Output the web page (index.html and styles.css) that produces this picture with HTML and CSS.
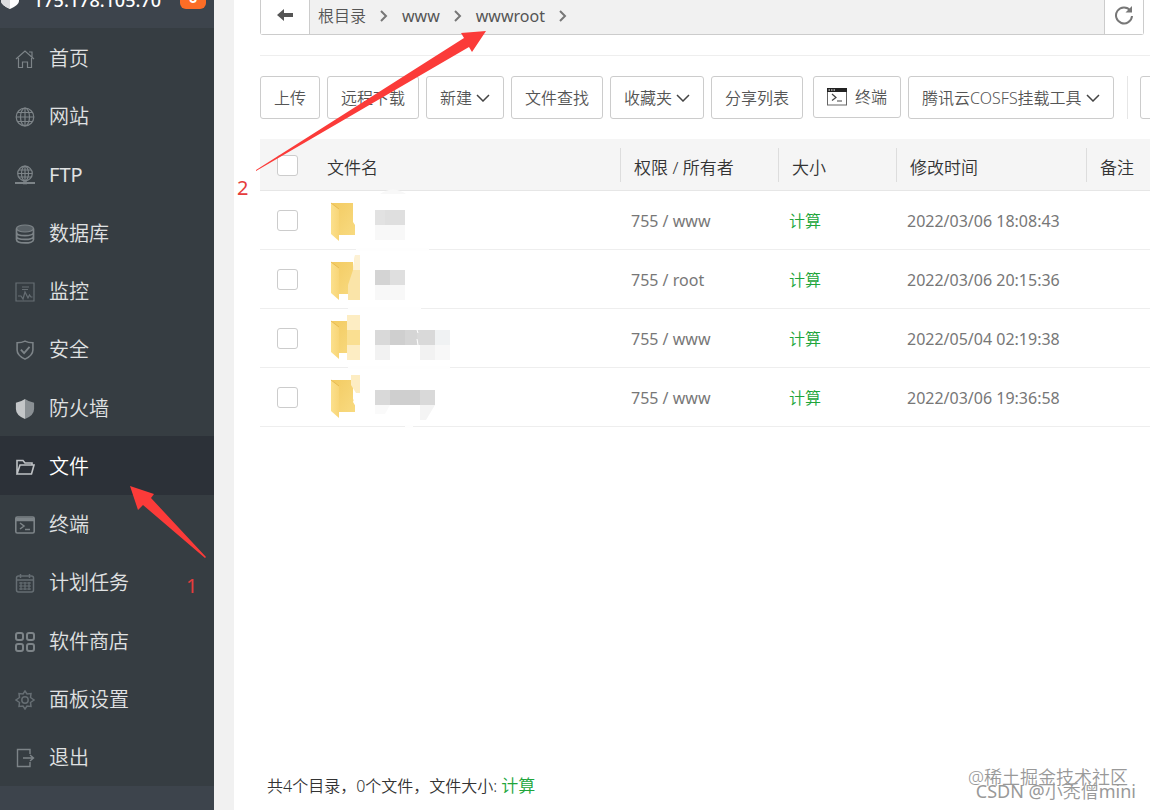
FILE: index.html
```html
<!DOCTYPE html>
<html lang="zh-CN">
<head>
<meta charset="utf-8">
<title>文件</title>
<link rel="stylesheet" href="styles.css">
</head>
<body>
<div class="app">
  <aside class="sidebar">
    <header class="server">
      <svg class="server-logo" viewBox="0 0 18 22"><path d="M9 0 18 4v10q0 4-9 8-9-4-9-8V4z" fill="#fff"/><path d="M9 0 0 4v10q0 4 9 8z" fill="#dcdcdf"/></svg>
      <span class="server-ip">175.178.105.70</span>
      <span class="badge">0</span>
    </header>
    <nav class="menu">
      <a href="#"><svg viewBox="0 0 20 20"><path d="M1 10 10 2l9 8M14 3h3v5M3.500 9v9.500h4V13h5v5.500h4V9"/></svg>首页</a>
      <a href="#"><svg viewBox="0 0 20 20"><circle cx="10" cy="10" r="8.800"/><ellipse cx="10" cy="10" rx="4.500" ry="8.800"/><path d="M10 1v18M1 10h18M2.500 5.500h15M2.500 14.500h15"/></svg>网站</a>
      <a href="#" class="latin"><svg viewBox="0 0 20 20"><circle cx="10" cy="8.500" r="7.300"/><ellipse cx="10" cy="8.500" rx="3.500" ry="7.300"/><path d="M10 1v15M3 8.500h14M4 5h12M4 12h12"/><path d="M0 18h20" stroke-width="2"/><path d="M8 17.800h4" stroke-width="3"/></svg>FTP</a>
      <a href="#"><svg viewBox="0 0 20 20"><ellipse cx="10" cy="4.500" rx="8.500" ry="3.500" fill="#596166"/><path d="M1.500 4.500v11c0 4.600 17 4.600 17 0v-11M1.500 8.200c0 4.600 17 4.600 17 0M1.500 12c0 4.600 17 4.600 17 0" stroke-width="1.700"/></svg>数据库</a>
      <a href="#"><svg class="dim" viewBox="0 0 20 20"><path d="M1 1h18v18H1zM7 5h7M7 7.500h6M3 14h3l2 3 2-7 3 6 1.500-3 1.500 2h1.500"/></svg>监控</a>
      <a href="#"><svg viewBox="0 0 20 22"><path d="M10 1.200Q13.500 3 18.700 3v8q0 6-8.700 10-8.700-4-8.700-10V3Q6.500 3 10 1.200z" stroke-width="1.700"/><path d="m5.500 10.500 3.500 4 6-7" stroke-width="2"/></svg>安全</a>
      <a href="#"><svg viewBox="0 0 20 22"><path d="M10 0v22Q0 18 0 11V4q6-1 10-4z" fill="#c3c6c8" stroke="none"/><path d="M10 0v22q10-4 10-11V4q-6-1-10-4z" fill="#8a9094" stroke="none"/></svg>防火墙</a>
      <a href="#" class="active" aria-current="page"><svg viewBox="0 0 20 20"><path d="M2 17V3.500h6l2 2.500h7v2M2 17 5 8h14l-2.500 9z" stroke-width="1.600"/></svg>文件</a>
      <a href="#"><svg viewBox="0 0 20 20"><rect x=".8" y="2" width="18.400" height="16" rx="1.500" stroke-width="1.600"/><path d="M1 4.500h18" stroke-width="3.500"/><path d="m5 8 4 3-4 3M10 14.500h5" stroke-width="1.500"/></svg>终端</a>
      <a href="#"><svg class="dim" viewBox="0 0 20 20"><rect x="1.500" y="3" width="17" height="16" rx="2" stroke-width="1.500"/><path d="M5.500 1v4M14.500 1v4M2 7h16" stroke-width="1.500"/><path d="M4 10h12M4 13h12M4 16h12M6 9v8M10 9v8M14 9v8"/></svg>计划任务</a>
      <a href="#"><svg viewBox="0 0 20 20"><g stroke-width="2"><rect x="1" y="1" width="7" height="7" rx="2"/><rect x="12" y="1" width="7" height="7" rx="2"/><rect x="1" y="12" width="7" height="7" rx="2"/><rect x="12" y="12" width="7" height="7" rx="2"/></g></svg>软件商店</a>
      <a href="#"><svg class="dim" viewBox="0 0 20 20"><circle cx="10" cy="10" r="3.200" stroke-width="1.500"/><path d="m10 1 2 3 4-.5-.5 4 3.500 2.500-3.500 2.500.5 4-4-.5-2 3-2-3-4 .5.5-4L1 10l3.500-2.500-.5-4 4 .5z" stroke-width="1.500"/></svg>面板设置</a>
      <a href="#"><svg viewBox="0 0 20 20"><path d="M15 6V1.500H2.500v17H15V14M8 10h10m-3-3 3.500 3-3.500 3" stroke-width="1.400"/></svg>退出</a>
    </nav>
  </aside>

  <main class="main">
    <div class="pathbar">
      <button class="back" aria-label="返回"><svg width="16" height="12" viewBox="0 0 16 12"><path d="M0 6l7-6v4h9v4H7v4z" fill="#555"/></svg></button>
      <nav class="crumbs">
        <a href="#">根目录</a><svg viewBox="0 0 8 12"><path d="m1 1 5 5-5 5"/></svg>
        <a href="#" class="latin">www</a><svg viewBox="0 0 8 12"><path d="m1 1 5 5-5 5"/></svg>
        <a href="#" class="latin">wwwroot</a><svg viewBox="0 0 8 12"><path d="m1 1 5 5-5 5"/></svg>
      </nav>
      <button class="refresh" aria-label="刷新"><svg width="20" height="20" viewBox="0 0 20 20"><path d="M16.300 5.500A8 8 0 1 0 18 11" fill="none" stroke="#777" stroke-width="2"/><path d="M18 1v6.500h-6.500z" fill="#777"/></svg></button>
    </div>

    <div class="toolbar">
      <button class="btn">上传</button>
      <button class="btn">远程下载</button>
      <button class="btn">新建<svg class="chev" viewBox="0 0 14 8"><path d="m1 1 6 6 6-6"/></svg></button>
      <button class="btn">文件查找</button>
      <button class="btn">收藏夹<svg class="chev" viewBox="0 0 14 8"><path d="m1 1 6 6 6-6"/></svg></button>
      <button class="btn">分享列表</button>
      <button class="btn terminal"><svg width="20" height="18" viewBox="0 0 20 18"><rect x=".5" y=".5" width="19" height="16.500" fill="none" stroke="#666"/><path d="M0 0h20v4H0z" fill="#222"/><path d="M1.500 2h1.500m1 0h1.500m1 0H8" stroke="#fff"/><path d="m5 6 4 3.500-4 3M10 13h5" fill="none" stroke="#444" stroke-width="1.200"/></svg>终端</button>
      <button class="btn">腾讯云COSFS挂载工具<svg class="chev" viewBox="0 0 14 8"><path d="m1 1 6 6 6-6"/></svg></button>
      <span class="divider"></span>
      <button class="btn" aria-label="更多"></button>
    </div>

    <svg class="defs" width="0" height="0" aria-hidden="true">
      <defs>
        <linearGradient id="flap" x1="0" x2="1"><stop offset="0" stop-color="#fbe08d"/><stop offset="1" stop-color="#f8d577"/></linearGradient>
        <linearGradient id="back" x1="0" x2="1" y1="0" y2="1"><stop offset="0" stop-color="#f3cb62"/><stop offset="1" stop-color="#f8da80"/></linearGradient>
        <g id="folder"><path d="M1 11h21v19l2 3v10H8z" fill="url(#back)"/><path d="M0 11l8 6v32l-8-7z" fill="url(#flap)"/><path d="M0 11l8 6" stroke="#e8bb52" fill="none"/></g>
      </defs>
    </svg>

    <table class="files">
      <colgroup><col class="c-check"><col><col class="c-perm"><col class="c-size"><col class="c-time"><col class="c-note"></colgroup>
      <thead>
        <tr><th><input type="checkbox" aria-label="全选"></th><th><div class="head first">文件名</div></th><th><div class="head">权限 / 所有者</div></th><th><div class="head">大小</div></th><th><div class="head">修改时间</div></th><th><div class="head">备注</div></th></tr>
      </thead>
      <tbody>
        <tr><td><input type="checkbox" aria-label="选择目录 1"></td>
          <td class="name"><svg viewBox="0 0 120 56"><path d="M25 56h73v3H25z" fill="#fefefe"/><use href="#folder"/><path d="M44 18h30v15H44z" fill="#dfdfdf"/><path d="M44 18h10v15H44z" fill="#e2e2e2"/><path d="M44 33h30v15H44z" fill="#f8f8f8"/><path d="M49 2q13-9 26 0z" fill="#f8f8f8"/></svg></td>
          <td>755 / www</td><td><a href="#">计算</a></td><td>2022/03/06 18:08:43</td><td></td></tr>
        <tr><td><input type="checkbox" aria-label="选择目录 2"></td>
          <td class="name"><svg viewBox="0 0 120 56"><path d="M17 56h73v3H17z" fill="#fefefe"/><use href="#folder"/><path d="M24 4h5v45H17V34l5-15z" fill="#fae4a8"/><path d="M24 4h5v15h-7z" fill="#fdf1d4"/><path d="M44 19h15v15H44z" fill="#d4d4d4"/><path d="M59 19h15v15H59z" fill="#dfdfdf"/><path d="M44 34h30v15H44z" fill="#f8f8f8"/></svg></td>
          <td>755 / root</td><td><a href="#">计算</a></td><td>2022/03/06 20:15:36</td><td></td></tr>
        <tr><td><input type="checkbox" aria-label="选择目录 3"></td>
          <td class="name"><svg viewBox="0 0 120 56"><path d="M17 56h102v3H17z" fill="#fefefe"/><use href="#folder"/><path d="M16 5h13v45H16z" fill="#fdedc3"/><path d="M16 20h13v15H16z" fill="#fadf91"/><path d="M44 20h60v15H44z" fill="#d9d9d9"/><path d="M59 20h27v15H59z" fill="#cfcfcf"/><path d="M74 20h12v15H74z" fill="#d5d5d5"/><path d="M86 20l1 3M86 29l1 6" stroke="#fff" fill="none"/><path d="M104 20h15v15h-15z" fill="#f0f2f3"/><path d="M44 35h15v15H44zM89 35h15v15H89z" fill="#f2f2f2"/><path d="M104 35h15v15h-15z" fill="#f8f8f8"/></svg></td>
          <td>755 / www</td><td><a href="#">计算</a></td><td>2022/05/04 02:19:38</td><td></td></tr>
        <tr><td><input type="checkbox" aria-label="选择目录 4"></td>
          <td class="name"><svg viewBox="0 0 120 56"><path d="M74 56h8v3h-8z" fill="#fefefe"/><use href="#folder"/><path d="M25 24l-3 9 3 5z" fill="#fff"/><path d="M20 6h9v18h-4l-5-8z" fill="#fdedc3"/><path d="M44 21h60v15H44z" fill="#d9d9d9"/><path d="M59 21h30v15H59z" fill="#cfcfcf"/><path d="M44 36h15l-5 9H44z" fill="#fafafa"/><path d="M89 36h15l-9 15h-6z" fill="#f4f4f4"/></svg></td>
          <td>755 / www</td><td><a href="#">计算</a></td><td>2022/03/06 19:36:58</td><td></td></tr>
      </tbody>
    </table>

    <footer class="summary">共4个目录，0个文件，文件大小: <a href="#">计算</a></footer>
  </main>
</div>

<svg class="annotations" width="500" height="600" viewBox="0 0 500 600" fill="#fb3b39" aria-hidden="true">
  <path d="M130 486l24 8-3 4 55 59-1 1-62-53-5 5z"/>
  <path d="M486 31l-25 2 3 5-208 132v1l213-124 3 5z"/>
</svg>
<span class="step step-one">1</span>
<span class="step step-two">2</span>
<span class="mark mark-top">@稀土掘金技术社区</span>
<span class="mark mark-bottom"><span class="latin">CSDN @</span>小秃僧<span class="latin">mini</span></span>
</body>
</html>
```
FILE: styles.css
```css
* { box-sizing: border-box; }

body {
  margin: 0;
  position: relative;
  overflow: hidden;
  font: 350 16px/24px "Noto Sans", "Noto Sans CJK SC", sans-serif;
  color: #666;
  background: #fff;
}

a { color: inherit; text-decoration: none; }
button { font: inherit; color: inherit; padding: 0; background: #fff; border: 0; }
.latin { font-weight: 400; }

.app { display: flex; height: 100vh; }

/* Sidebar */
.sidebar {
  flex: 0 0 214px;
  display: flex;
  flex-direction: column;
  padding-bottom: 24px;
  background: #3d444c;
}

.server {
  display: flex;
  align-items: flex-end;
  height: 28px;
  padding: 0 8px 19px 1px;
}
.server-logo { width: 18px; height: 22px; margin-right: 14px; }
.server-ip { font-size: 18px; font-weight: 500; line-height: 18px; color: #fff; }
.badge {
  width: 26px;
  margin-left: auto;
  border-radius: 6px;
  background: #fc6d26;
  color: #fff;
  font-weight: 600;
  text-align: center;
}

.menu { flex: 1; display: flex; flex-direction: column; background: #363d42; }
.menu a {
  flex: 1;
  display: flex;
  align-items: center;
  gap: 14px;
  padding: 3px 0 0 15px;
  font-size: 20px;
  color: #e0e2e3;
}
.menu svg { width: 20px; height: 20px; fill: none; stroke: #7d8488; stroke-width: 1.2; }
.menu svg.dim { stroke: #666e73; }
.menu .active { background: #2c3138; color: #fff; }
.menu .active svg { stroke: #bfc2c5; }

/* Main panel */
.main {
  flex: 1;
  min-width: 0;
  display: flex;
  flex-direction: column;
  padding-left: 26px;
  border-left: 20px solid #f1f1f1;
}

.pathbar {
  display: flex;
  height: 35px;
  margin-right: 6px;
  border: 1px solid #ccc;
  border-top: 0;
  border-radius: 0 0 3px 3px;
}
.back { width: 49px; border-right: 1px solid #ccc; padding-bottom: 4px; }
.refresh { width: 39px; border-left: 1px solid #ccc; }
.refresh svg { display: block; margin: -4px auto 0; }
.crumbs {
  flex: 1;
  display: flex;
  align-items: center;
  gap: 14px;
  padding: 0 8px 2px;
  background: #f1f1f1;
  color: #555;
}
.crumbs svg { width: 8px; height: 12px; fill: none; stroke: #777; stroke-width: 2; }

.toolbar {
  display: flex;
  gap: 7px;
  margin-top: 20px;
  padding: 20px 0;
  border-top: 1px solid #eee;
  overflow: hidden;
}
.btn {
  flex: none;
  display: flex;
  align-items: center;
  height: 43px;
  padding: 0 13px;
  border: 1px solid #ccc;
  border-radius: 3px;
  color: #555;
  white-space: nowrap;
}
.chev { width: 14px; height: 8px; margin-left: 4px; fill: none; stroke: #444; stroke-width: 1.5; }
.terminal { gap: 8px; height: 42px; margin-left: 3px; }
.divider { flex: none; width: 1px; margin: 0 5px 0 6px; background: #e6e6e6; }

.defs { position: absolute; }

/* File table */
.files { width: 100%; table-layout: fixed; border-collapse: separate; border-spacing: 0; }
.c-check { width: 54px; }
.c-perm { width: 158px; }
.c-size { width: 118px; }
.c-time { width: 190px; }
.c-note { width: 64px; }
.files th {
  height: 52px;
  padding: 0;
  background: #f5f5f5;
  border-bottom: 1px solid #e6e6e6;
  text-align: left;
  font-size: 17px;
  font-weight: 350;
  color: #333;
  white-space: nowrap;
}
.head { height: 34px; padding: 8px 0 0 13px; border-left: 1px solid #ddd; }
.head.first { border-left: 0; }
.files td {
  height: 59px;
  padding: 2px 0 0 11px;
  border-bottom: 1px solid #eee;
  font-weight: 400;
  color: #777;
}
.files th:first-child { padding: 2px 0 0 17px; }
.files td:first-child { padding: 0 0 0 17px; }
.files td.name { padding: 0 0 0 17px; }
.name svg { display: block; width: 120px; height: 56px; overflow: visible; }
.files input {
  appearance: none;
  display: block;
  width: 21px;
  height: 21px;
  margin: 0;
  background: #fff;
  border: 1px solid #ccc;
  border-radius: 3px;
}
.files a, .summary a { color: #20a53a; font-weight: 350; }

.summary { margin-top: auto; padding: 0 0 12px 7px; color: #333; }
.summary a { font-size: 17px; }

/* Notes laid over the page */
.annotations { position: absolute; left: 0; top: 0; pointer-events: none; }
.step { position: absolute; font-size: 20px; font-weight: 400; color: #e63c3c; }
.step-one { left: 186px; top: 574px; }
.step-two { left: 237px; top: 176px; }
.mark { position: absolute; font-size: 18px; color: #999; white-space: nowrap; }
.mark-top { right: 22px; top: 765px; }
.mark-bottom { right: 14px; top: 779px; color: #999; }
```
